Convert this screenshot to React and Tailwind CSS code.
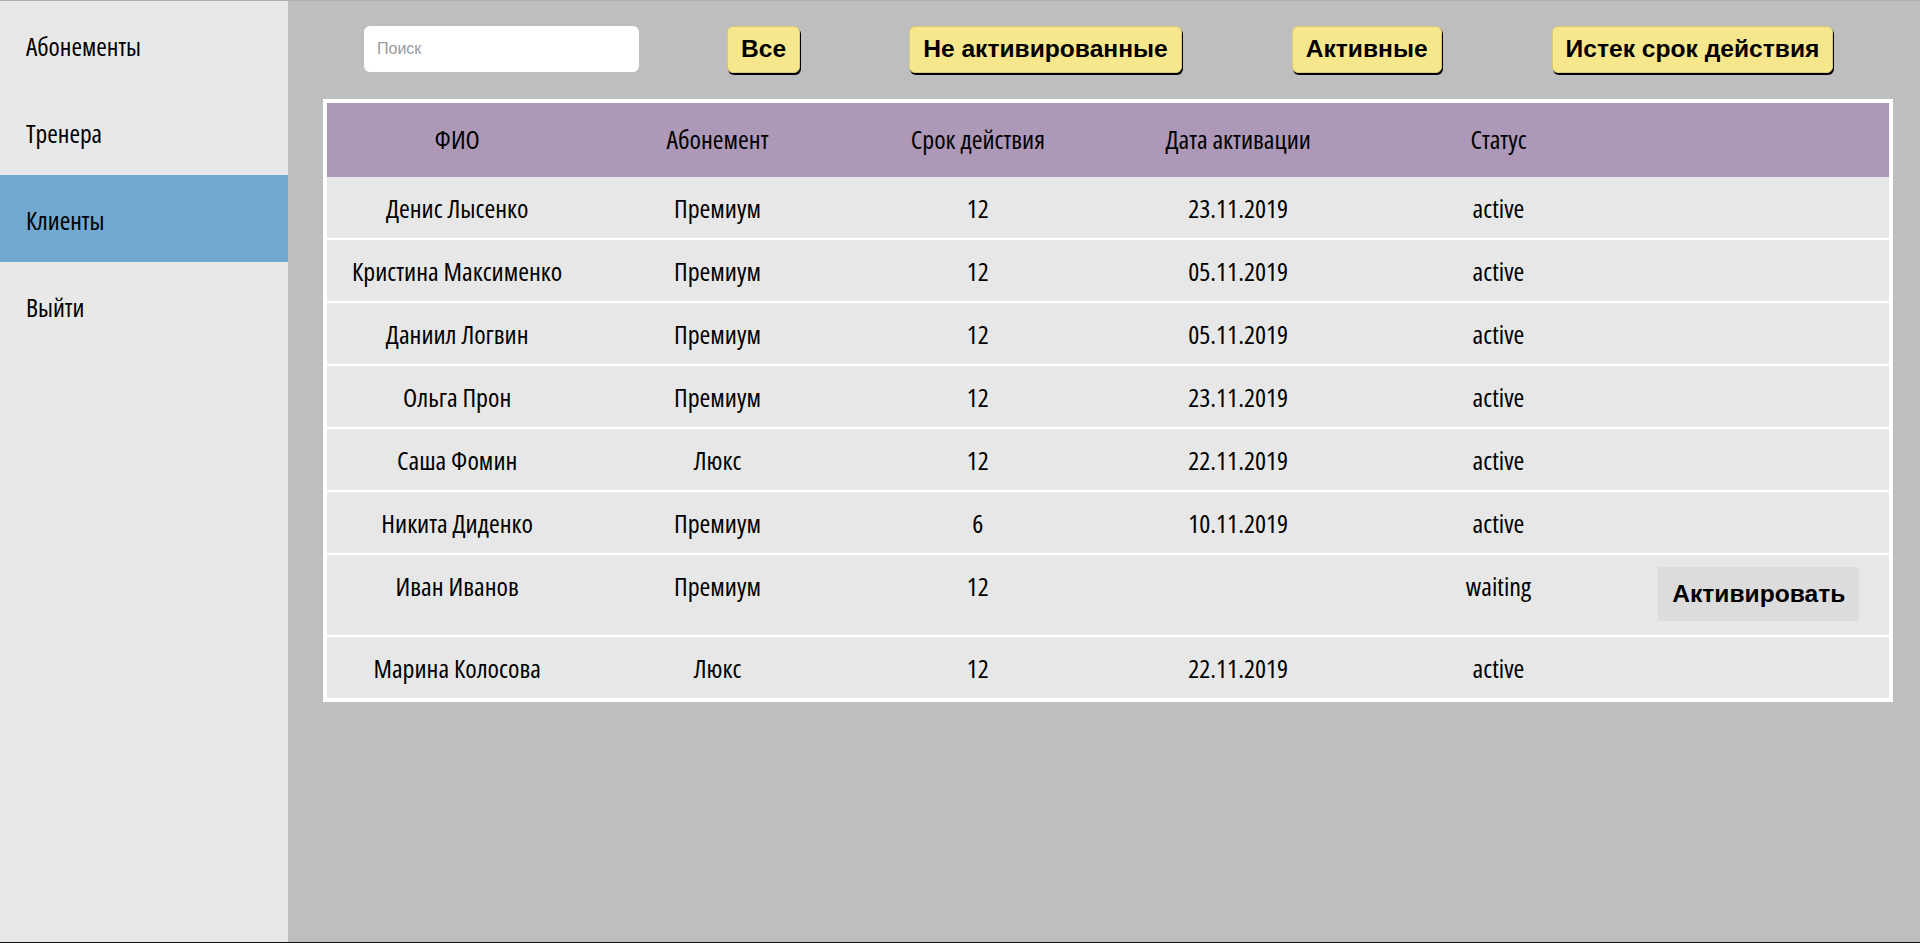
import React from 'react';

const menu = ['Абонементы', 'Тренера', 'Клиенты', 'Выйти'];

const clients = [
    { name: 'Денис Лысенко', sub: 'Премиум', term: '12', date: '23.11.2019', status: 'active' },
    { name: 'Кристина Максименко', sub: 'Премиум', term: '12', date: '05.11.2019', status: 'active' },
    { name: 'Даниил Логвин', sub: 'Премиум', term: '12', date: '05.11.2019', status: 'active' },
    { name: 'Ольга Прон', sub: 'Премиум', term: '12', date: '23.11.2019', status: 'active' },
    { name: 'Саша Фомин', sub: 'Люкс', term: '12', date: '22.11.2019', status: 'active' },
    { name: 'Никита Диденко', sub: 'Премиум', term: '6', date: '10.11.2019', status: 'active' },
    { name: 'Иван Иванов', sub: 'Премиум', term: '12', date: '', status: 'waiting' },
    { name: 'Марина Колосова', sub: 'Люкс', term: '12', date: '22.11.2019', status: 'active' },
];

// condensed face for menu + table text
const narrow = { fontFamily: '"Open Sans", "DejaVu Sans Condensed", sans-serif' };
const arial = { fontFamily: '"Liberation Sans", Arial, sans-serif' };

const FilterButton = ({ children, className }) => (
    <button
        className={`h-[47px] px-[13px] rounded-[6px] bg-[#f7e78c] border border-[#d8c878] shadow-[1px_2px_0_#000] text-[24.6px] font-bold text-black leading-none font-stretch-normal ${className}`}
        style={arial}
    >
        {children}
    </button>
);

const App = () => {
    return (
        <div className="flex h-[943px] border-t border-[#adadad] border-b border-b-[#111] font-stretch-condensed font-medium" style={narrow}>
            <aside className="w-[288px] shrink-0 bg-[#e8e8e8]">
                {menu.map((item) => (
                    <div
                        key={item}
                        className={`h-[87px] flex items-center pl-[26px] pt-[3px] text-[25.5px] text-black ${item === 'Клиенты' ? 'bg-[#72a9d0]' : ''}`}
                    >
                        {item}
                    </div>
                ))}
            </aside>
            <main className="flex-1 bg-[#bebebe] flex flex-col">
                <div className="flex items-start pt-[25px] pl-[76px]">
                    <input
                        placeholder="Поиск"
                        className="w-[275px] h-[46px] rounded-[6px] bg-white pl-[13px] text-[16px] font-normal outline-none placeholder:text-[#9a9a9a] font-stretch-normal"
                        style={arial}
                    />
                    <FilterButton className="ml-[88px]">Все</FilterButton>
                    <FilterButton className="ml-[109px]">Не активированные</FilterButton>
                    <FilterButton className="ml-[110px]">Активные</FilterButton>
                    <FilterButton className="ml-[110px]">Истек срок действия</FilterButton>
                </div>
                <div className="mt-[26px] ml-[35px] mr-[27px] border-4 border-white bg-white">
                    <table className="w-full table-fixed border-collapse text-[26px] text-black text-center">
                        <thead className="bg-[#ae98b7]">
                            <tr>
                                {['ФИО', 'Абонемент', 'Срок действия', 'Дата активации', 'Статус', ''].map((h, i) => (
                                    <th key={i} className="h-[74px] pb-[2px] font-medium leading-[37px]">{h}</th>
                                ))}
                            </tr>
                        </thead>
                        <tbody>
                            {clients.map((c, i) => (
                                <tr key={c.name} className={`bg-[#e7e7e7] ${i > 0 ? 'border-t-2 border-white' : ''}`}>
                                    <td className="pt-[13px] pb-[11px] align-top leading-[37px]">{c.name}</td>
                                    <td className="pt-[13px] pb-[11px] align-top leading-[37px]">{c.sub}</td>
                                    <td className="pt-[13px] pb-[11px] align-top leading-[37px]">{c.term}</td>
                                    <td className="pt-[13px] pb-[11px] align-top leading-[37px]">{c.date}</td>
                                    <td className="pt-[13px] pb-[11px] align-top leading-[37px]">{c.status}</td>
                                    <td className="pt-[12px] pb-[14px] align-top leading-[37px]">
                                        {c.status === 'waiting' && (
                                            <button
                                                className="h-[54px] px-[14px] bg-[#dcdcdc] text-[24.6px] font-bold leading-none font-stretch-normal"
                                                style={arial}
                                            >
                                                Активировать
                                            </button>
                                        )}
                                    </td>
                                </tr>
                            ))}
                        </tbody>
                    </table>
                </div>
            </main>
        </div>
    );
};

export default App;
